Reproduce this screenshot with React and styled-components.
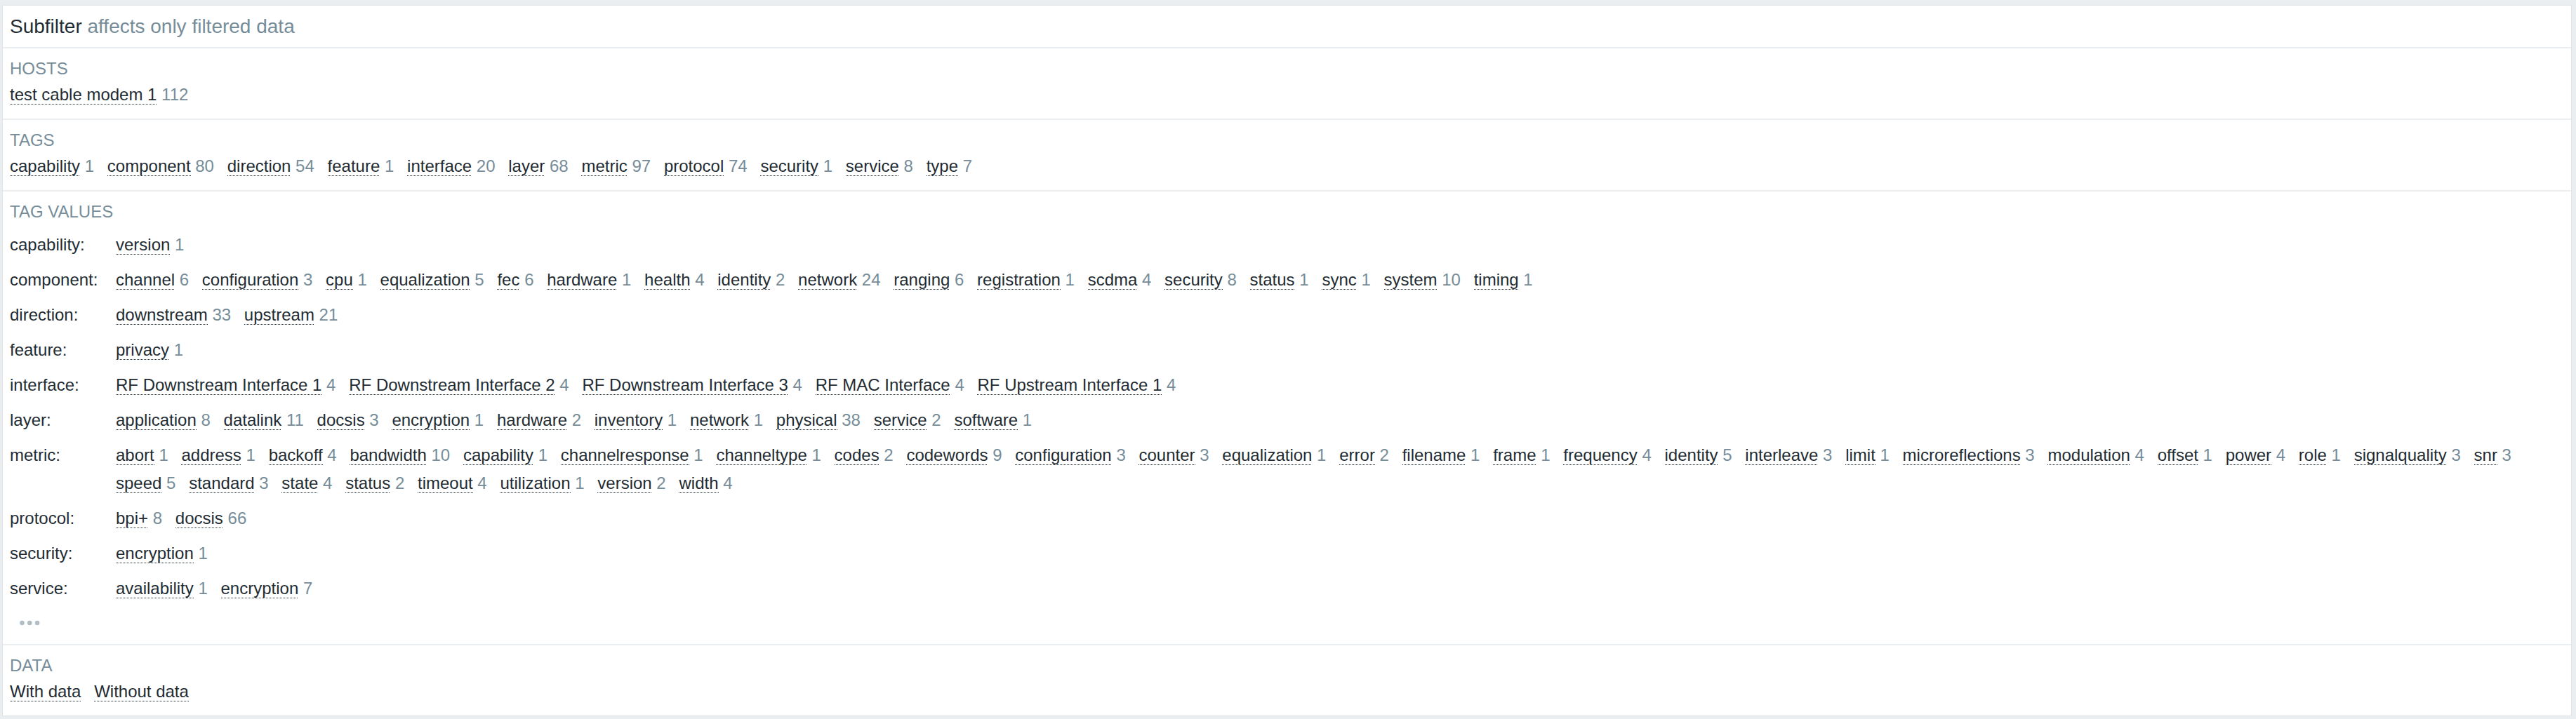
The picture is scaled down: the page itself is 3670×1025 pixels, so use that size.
import styled, { createGlobalStyle } from 'styled-components';

const GlobalStyle = createGlobalStyle`
    html, body {
        margin: 0;
        background: #ebeef0;
    }
    body {
        padding: 7px 6px 4px 3px;
        font-family: "Liberation Sans", Arial, sans-serif;
        color: #1f2c33;
    }
`

const Panel = styled.div`
    background: #fff;
    border: 1px solid #dfe4e7;
`

const Header = styled.div`
    height: 59px;
    line-height: 59px;
    padding: 0 10px;
    font-size: 28px;
    border-bottom: 2px solid #ebeef0;
    white-space: nowrap;
`

const Muted = styled.span`
    color: #768d99;
`

const Section = styled.div`
    padding: 10px 10px ${p => p.$bottom || 16}px;
    font-size: 24px;
    border-bottom: ${p => p.$last ? 'none' : '2px solid #ebeef0'};
`

const Title = styled.div`
    line-height: 37px;
    color: #768d99;
    text-transform: uppercase;
    margin-bottom: ${p => p.$gap || 0}px;
`

const Items = styled.div`
    display: flex;
    flex-wrap: wrap;
    column-gap: 18.75px;
    line-height: ${p => p.$lh || 37}px;
    min-width: 0;
`

const Item = styled.span`
    white-space: nowrap;
`

// dotted underline, drawn as a 1px-on / 1px-off pattern under the text
const Link = styled.span`
    padding-bottom: 1px;
    background-image: linear-gradient(to right, #1f2c33 50%, transparent 50%);
    background-size: 2px 1.5px;
    background-repeat: repeat-x;
    background-position: 0 100%;
    cursor: pointer;
`

const Count = styled.span`
    color: #768d99;
`

const ValueRow = styled.div`
    display: grid;
    grid-template-columns: 151px 1fr;
    padding: 5px 0;
`

const RowLabel = styled.div`
    line-height: 40px;
    white-space: nowrap;
`

const MoreButton = styled.div`
    height: 29px;
    margin-top: 9px;
    padding-left: 14px;
    display: flex;
    align-items: center;
`

const hosts = [['test cable modem 1', 112]]

const tags = [
    ['capability', 1], ['component', 80], ['direction', 54], ['feature', 1],
    ['interface', 20], ['layer', 68], ['metric', 97], ['protocol', 74],
    ['security', 1], ['service', 8], ['type', 7]
]

const tagValues = [
    ['capability', [['version', 1]]],
    ['component', [
        ['channel', 6], ['configuration', 3], ['cpu', 1], ['equalization', 5], ['fec', 6],
        ['hardware', 1], ['health', 4], ['identity', 2], ['network', 24], ['ranging', 6],
        ['registration', 1], ['scdma', 4], ['security', 8], ['status', 1], ['sync', 1],
        ['system', 10], ['timing', 1]
    ]],
    ['direction', [['downstream', 33], ['upstream', 21]]],
    ['feature', [['privacy', 1]]],
    ['interface', [
        ['RF Downstream Interface 1', 4], ['RF Downstream Interface 2', 4],
        ['RF Downstream Interface 3', 4], ['RF MAC Interface', 4], ['RF Upstream Interface 1', 4]
    ]],
    ['layer', [
        ['application', 8], ['datalink', 11], ['docsis', 3], ['encryption', 1], ['hardware', 2],
        ['inventory', 1], ['network', 1], ['physical', 38], ['service', 2], ['software', 1]
    ]],
    ['metric', [
        ['abort', 1], ['address', 1], ['backoff', 4], ['bandwidth', 10], ['capability', 1],
        ['channelresponse', 1], ['channeltype', 1], ['codes', 2], ['codewords', 9],
        ['configuration', 3], ['counter', 3], ['equalization', 1], ['error', 2], ['filename', 1],
        ['frame', 1], ['frequency', 4], ['identity', 5], ['interleave', 3], ['limit', 1],
        ['microreflections', 3], ['modulation', 4], ['offset', 1], ['power', 4], ['role', 1],
        ['signalquality', 3], ['snr', 3], ['speed', 5], ['standard', 3], ['state', 4],
        ['status', 2], ['timeout', 4], ['utilization', 1], ['version', 2], ['width', 4]
    ]],
    ['protocol', [['bpi+', 8], ['docsis', 66]]],
    ['security', [['encryption', 1]]],
    ['service', [['availability', 1], ['encryption', 7]]]
]

const dataFilters = ['With data', 'Without data']

function FilterItem({ name, count }) {
    return (
        <Item>
            <Link>{name}</Link>
            {count !== undefined && <> <Count>{count}</Count></>}
        </Item>
    )
}

function MoreIcon() {
    return (
        <svg width="29" height="8" viewBox="0 0 29 8">
            <circle cx="3.5" cy="4" r="3.3" fill="#b2bec5" />
            <circle cx="14.3" cy="4" r="3.3" fill="#b2bec5" />
            <circle cx="25.1" cy="4" r="3.3" fill="#b2bec5" />
        </svg>
    )
}

export default function App() {
    return (
        <>
            <GlobalStyle />
            <Panel>
                <Header>
                    Subfilter <Muted>affects only filtered data</Muted>
                </Header>

                <Section>
                    <Title>Hosts</Title>
                    <Items>
                        {hosts.map(([name, count]) => <FilterItem key={name} name={name} count={count} />)}
                    </Items>
                </Section>

                <Section>
                    <Title>Tags</Title>
                    <Items>
                        {tags.map(([name, count]) => <FilterItem key={name} name={name} count={count} />)}
                    </Items>
                </Section>

                <Section>
                    <Title $gap={4}>Tag values</Title>
                    {tagValues.map(([tag, values]) => (
                        <ValueRow key={tag}>
                            <RowLabel>{tag}:</RowLabel>
                            <Items $lh={40}>
                                {values.map(([name, count]) => <FilterItem key={name} name={name} count={count} />)}
                            </Items>
                        </ValueRow>
                    ))}
                    <MoreButton>
                        <MoreIcon />
                    </MoreButton>
                </Section>

                <Section $last>
                    <Title>Data</Title>
                    <Items>
                        {dataFilters.map(name => <FilterItem key={name} name={name} />)}
                    </Items>
                </Section>
            </Panel>
        </>
    )
}
